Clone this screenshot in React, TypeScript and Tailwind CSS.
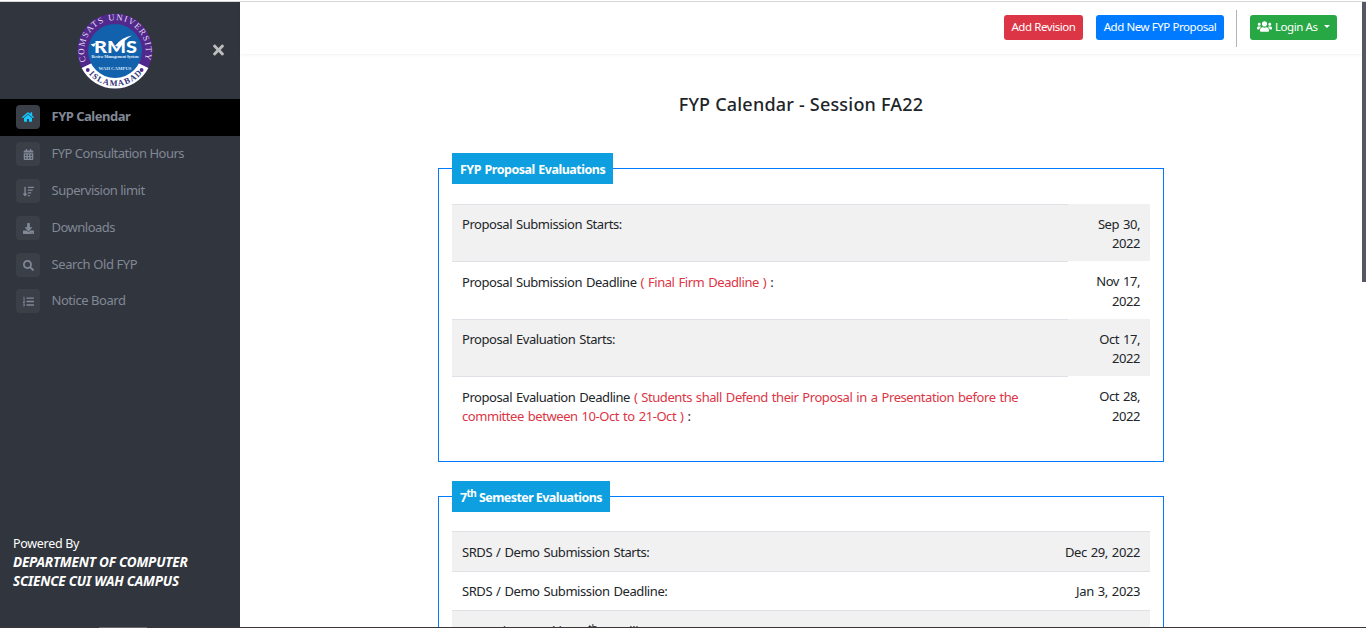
import React from "react";
import { FaHome, FaCalendarAlt, FaSortAmountDown, FaDownload, FaSearch, FaListOl, FaUsers, FaTimes } from "react-icons/fa";

const nav = [
  { icon: FaHome, label: "FYP Calendar", cls: "tracking-[-0.5px]", height: "h-[37px]", size: "size-3" },
  { icon: FaCalendarAlt, label: "FYP Consultation Hours", cls: "tracking-[-0.5px]", height: "h-[37px]", size: "size-[11px]" },
  { icon: FaSortAmountDown, label: "Supervision limit", cls: "tracking-[-0.5px]", height: "h-[37px]", size: "size-[11px]" },
  { icon: FaDownload, label: "Downloads", cls: "tracking-[-0.5px]", height: "h-[37px]", size: "size-[11px]" },
  { icon: FaSearch, label: "Search Old FYP", cls: "tracking-[-0.4px]", height: "h-[36px]", size: "size-[11px]" },
  { icon: FaListOl, label: "Notice Board", cls: "tracking-[-0.45px]", height: "h-[37px]", size: "size-[11px]" },
];

function Logo() {
  return (
    <svg viewBox="0 0 76 76" className="h-[76px] w-[76px]" fontFamily="Liberation Serif, serif">
      <defs>
        <path id="arcTop" d="M 12.8 55.6 A 30.8 30.8 0 1 1 63.2 55.6" />
        <path id="arcBottom" d="M 4.8 49 A 35 35 0 0 0 71.2 49" />
      </defs>
      <circle cx="38" cy="38" r="37.5" fill="#51288b" />
      <path d="M 4.6 55 A 37.5 37.5 0 0 0 71.4 55 L 61 50 A 26.5 26.5 0 0 1 15 50 Z" fill="#fff" />
      <circle cx="38" cy="38" r="27" fill="#1261ac" />
      <circle cx="10.8" cy="57" r="1.9" fill="#51288b" />
      <circle cx="64.6" cy="57" r="1.9" fill="#51288b" />
      <text fontSize="8.8" fill="#e6def0">
        <textPath href="#arcTop" startOffset="8" textLength="116" lengthAdjust="spacing">COMSATS UNIVERSITY</textPath>
      </text>
      <text fontSize="8.4" fontWeight="700" fill="#32327a">
        <textPath href="#arcBottom" startOffset="14" textLength="60" lengthAdjust="spacing">ISLAMABAD</textPath>
      </text>
      <text x="17" y="39.5" fontSize="17.5" fontWeight="900" fontFamily="Lato, sans-serif" fill="#fff" textLength="43" lengthAdjust="spacingAndGlyphs">RMS</text>
      <path d="M13.5 31.5 L19 30 L17 34 Z M38 33 Q45 24 55 22.5 Q47 27 43 34 Z" fill="#fff" />
      <text x="14.5" y="44.8" fontSize="4.2" fontWeight="700" fill="#e4eefa" textLength="47">Review Management System</text>
      <text x="21.5" y="57" fontSize="4.8" fontWeight="700" fill="#cfe1f4" textLength="33">WAH CAMPUS</text>
    </svg>
  );
}

type RowProps = { label: React.ReactNode; date?: string; shaded?: boolean; height: string; pad?: string; datePad?: string };

function Row({ label, date, shaded, height, pad = "pt-[10px]", datePad = "leading-[19.3px]" }: RowProps) {
  return (
    <div className={`flex ${height} ${shaded ? "bg-[#f1f1f1]" : ""}`}>
      <div className={`w-[616px] whitespace-nowrap border-t border-[#dee2e6] pl-[10px] ${pad}`}>{label}</div>
      <div className={`w-[82px] border-t border-transparent pl-4 pr-[10px] pt-[10px] text-right ${datePad}`}>{date}</div>
    </div>
  );
}

function WideRow({ label, date, shaded, height, pad = "pt-[11px]" }: RowProps) {
  return (
    <div className={`flex justify-between whitespace-nowrap border-t border-[#dee2e6] px-[10px] ${height} ${pad} ${shaded ? "bg-[#f1f1f1]" : ""}`}>
      <span>{label}</span>
      {date && <span className="tracking-[-0.4px]">{date}</span>}
    </div>
  );
}

export default function App() {
  return (
    <div className="flex h-[628px] w-[1366px] flex-col overflow-hidden bg-white font-['Noto_Sans',sans-serif] text-[13px] text-[#212529]">
      <div className="h-[2px] shrink-0 border-t border-white bg-[#d5d8d8]" />
      <div className="flex h-[625px] shrink-0 overflow-hidden">
        <aside className="flex w-[240px] shrink-0 flex-col bg-[#31353d]">
          <div className="flex h-[97px] items-start pl-[77px] pt-[11px]">
            <Logo />
            <FaTimes className="ml-[58px] mt-[29px] h-4 w-[15px] text-[#bdbdbd]" />
          </div>
          <nav className="text-[#818896]">
            {nav.map(({ icon: Icon, label, cls, height, size }, i) => (
              <div key={label} className={`flex items-start pl-4 pt-[6px] ${height} ${i === 0 ? "bg-black font-bold" : ""}`}>
                <span className={`flex size-6 items-center justify-center rounded bg-[#3a3f48] ${i === 0 ? "text-[#16c7ff]" : ""}`}>
                  <Icon className={size} />
                </span>
                <span className={`ml-[11.5px] whitespace-nowrap leading-[22px] ${cls}`}>{label}</span>
              </div>
            ))}
          </nav>
          <div className="mt-auto pb-[36px] pl-[13px] leading-[19px] text-white">
            <div className="text-[12.5px] tracking-[-0.3px]">Powered By</div>
            <div className="whitespace-nowrap text-[13.5px] font-bold italic tracking-[-0.2px]">DEPARTMENT OF COMPUTER<br />SCIENCE CUI WAH CAMPUS</div>
          </div>
        </aside>
        <main className="flex min-w-0 flex-1 flex-col">
          <header className="flex h-[52px] shrink-0 items-start pl-[764px] pt-[8px] text-[11.5px] leading-[17px] tracking-[-0.43px] text-white shadow-[0_1px_3px_rgba(0,0,0,0.06)]">
            <button className="mt-[5px] h-[25px] w-[79px] whitespace-nowrap rounded-[3px] bg-[#dc3545] pb-[2px] text-center">Add Revision</button>
            <button className="ml-[13px] mt-[5px] h-[25px] w-[128px] whitespace-nowrap rounded-[3px] bg-[#007bff] pb-[2px] text-center">Add New FYP Proposal</button>
            <div className="ml-[12px] h-[37px] w-px bg-[#b3b3b3]" />
            <button className="ml-[13px] mt-[5px] flex h-[25px] w-[87px] items-center whitespace-nowrap rounded-[3px] bg-[#28a745] pb-[2px] pl-[7px]">
              <FaUsers className="mr-[3px] size-[15px]" />
              <span>Login As</span>
              <span className="ml-[6px] border-x-[3px] border-t-[3px] border-x-transparent border-t-white" />
            </button>
          </header>
          <h1 className="mt-[39px] shrink-0 text-center text-[18px] font-medium leading-[22px] tracking-[0.2px]">FYP Calendar - Session FA22</h1>
          <section className="ml-[198px] mt-[38px] w-[726px] shrink-0">
            <div className="flex h-[31px]">
              <div className="mt-[15px] w-[14px] border-l border-t border-[#007bff]" />
              <div className="w-[161px] bg-[#0d9fe0] pl-2 pt-[7px] text-[12.5px] font-bold leading-[19px] text-white"><span className="whitespace-nowrap tracking-[-0.49px] [word-spacing:0.8px]">FYP Proposal Evaluations</span></div>
              <div className="mt-[15px] flex-1 border-r border-t border-[#007bff]" />
            </div>
            <div className="h-[278px] border-x border-b border-[#007bff] px-[13px] pt-[20px] leading-[19.3px] tracking-[-0.44px] [word-spacing:1px]">
              <Row height="h-[57px]" shaded label="Proposal Submission Starts:" date="Sep 30, 2022" />
              <Row height="h-[58px]" pad="pt-[11px]" datePad="leading-[19.5px]" label={<>Proposal Submission Deadline <span className="text-[#dc3545]">( Final Firm Deadline )</span> :</>} date="Nov 17, 2022" />
              <Row height="h-[57px]" shaded label="Proposal Evaluation Starts:" date="Oct 17, 2022" />
              <Row height="h-[58px]" pad="pt-[11px]" datePad="leading-[19.5px]" label={<>Proposal Evaluation Deadline <span className="text-[#dc3545]">( Students shall Defend their Proposal in a Presentation before the<br />committee between 10-Oct to 21-Oct )</span> :</>} date="Oct 28, 2022" />
            </div>
          </section>
          <section className="ml-[198px] mt-[19px] w-[726px] shrink-0">
            <div className="flex h-[31px]">
              <div className="mt-[15px] w-[14px] border-l border-t border-[#007bff]" />
              <div className="w-[158px] bg-[#0d9fe0] pl-2 pt-[7px] text-[12.5px] font-bold leading-[19px] text-white"><span className="whitespace-nowrap tracking-[-0.57px]">7<sup className="text-[10px]">th</sup> Semester Evaluations</span></div>
              <div className="mt-[15px] flex-1 border-r border-t border-[#007bff]" />
            </div>
            <div className="h-[278px] border-x border-b border-[#007bff] px-[13px] pt-[19px] leading-[19.3px] tracking-[-0.43px] [word-spacing:1px]">
              <WideRow height="h-[40px]" shaded label="SRDS / Demo Submission Starts:" date="Dec 29, 2022" />
              <WideRow height="h-[39px]" pad="pt-[10px]" label="SRDS / Demo Submission Deadline:" date="Jan 3, 2023" />
              <WideRow height="h-[40px]" pad="pt-[11px]" shaded label={<span className="tracking-[-0.3px]">Supervisor Marking 7<sup>th</sup> Deadline:</span>} />
            </div>
          </section>
        </main>
        <div className="h-[280px] w-[4px] bg-[#525965]" />
      </div>
      <div className="flex h-px shrink-0 bg-[#3d3438]"><div className="ml-[99px] w-[48px] bg-[#6b6567]" /></div>
    </div>
  );
}
